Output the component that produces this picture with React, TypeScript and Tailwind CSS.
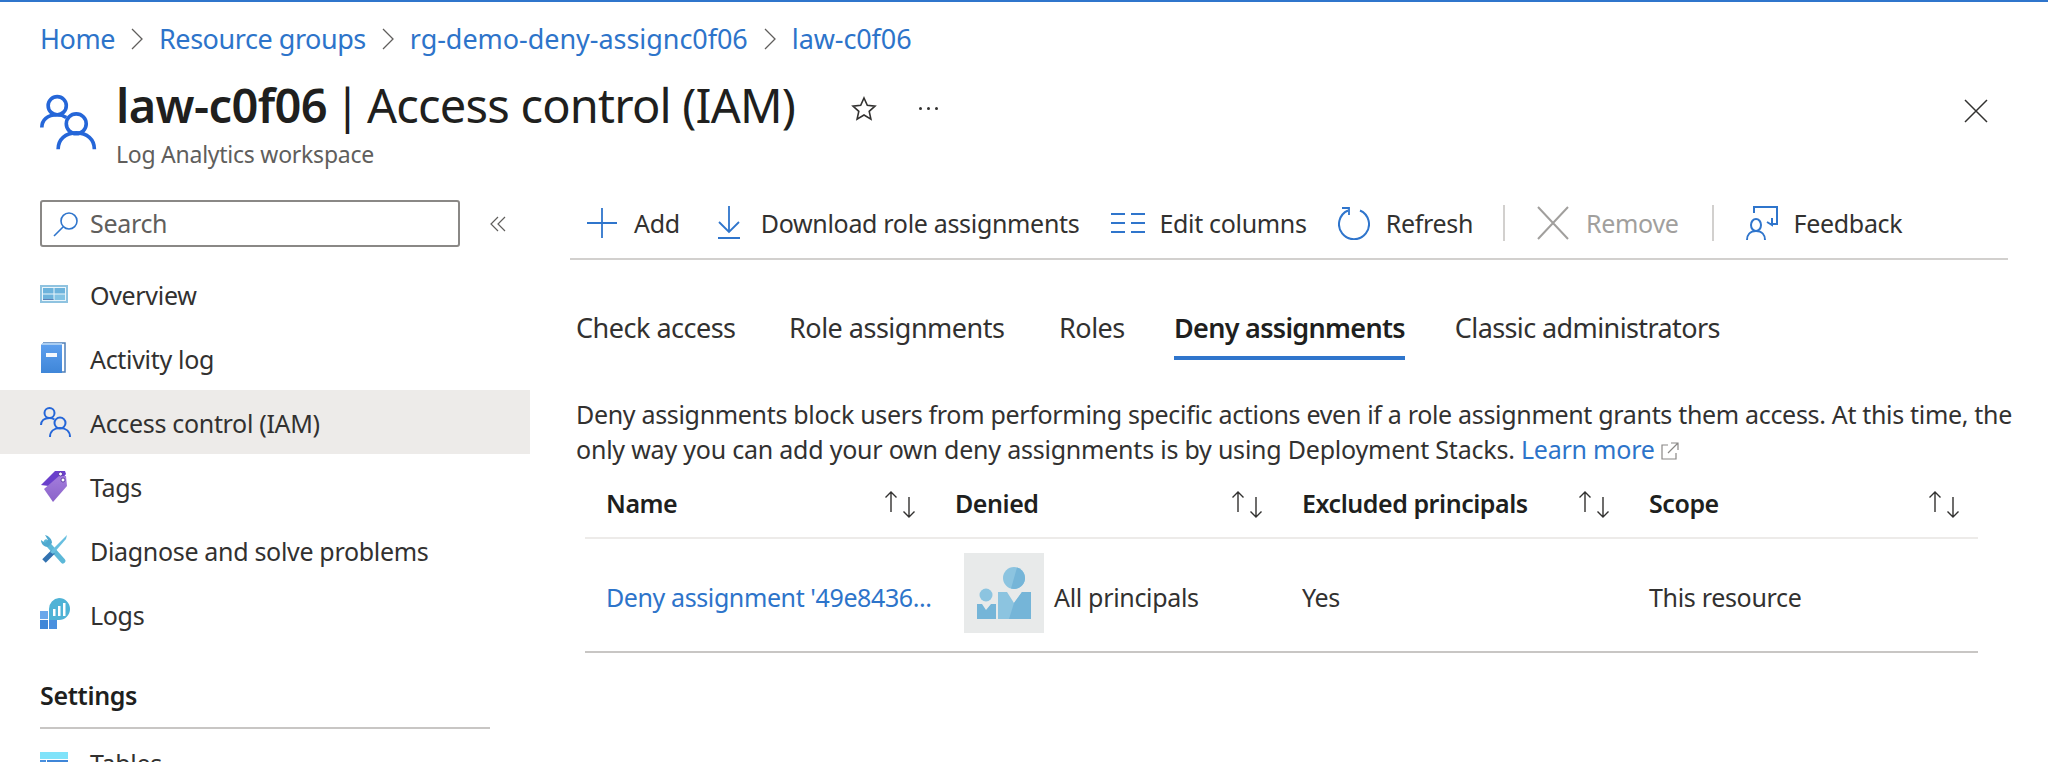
import React from 'react';

const navItems = [
  { label: 'Overview', icon: <OverviewIcon /> },
  { label: 'Activity log', icon: <BookIcon /> },
  { label: 'Access control (IAM)', icon: <PeopleIcon size={32} />, active: true },
  { label: 'Tags', icon: <TagIcon /> },
  { label: 'Diagnose and solve problems', icon: <ToolsIcon /> },
  { label: 'Logs', icon: <LogsIcon /> },
];

function PeopleIcon({ size }: { size: number }) {
  return (
    <svg width={size} height={size} viewBox="0 0 32 32" fill="none" stroke="#2566d8" strokeWidth="2">
      <circle cx="9.5" cy="7" r="5" />
      <path d="M1 19c0-4 3-7 8.500-7 2 0 3.500.5 5 1.500" />
      <circle cx="20" cy="17" r="5.500" />
      <path d="M10 31c0-5.500 4-9 10-9s10 3.500 10 9" />
    </svg>
  );
}

function OverviewIcon() {
  return (
    <svg width="28" height="18" viewBox="0 0 28 18">
      <rect width="28" height="18" fill="#8fc3e0" />
      <rect x="2" y="2" width="24" height="14" fill="#eaf5fb" />
      <rect x="3" y="3" width="10.500" height="5.500" fill="#6db3dc" />
      <rect x="14.500" y="3" width="10.500" height="5.500" fill="#6db3dc" />
      <rect x="3" y="9.500" width="10.500" height="5.500" fill="#6db3dc" />
      <rect x="14.500" y="9.500" width="10.500" height="5.500" fill="#83c3e4" />
      <rect x="3" y="14" width="10.500" height="1" fill="#5b7fb5" />
    </svg>
  );
}

function BookIcon() {
  return (
    <svg width="26" height="32" viewBox="0 0 26 32">
      <defs>
        <linearGradient id="bookFill" x1="0" y1="0" x2="0" y2="1">
          <stop offset="0" stopColor="#5ea0ef" />
          <stop offset="1" stopColor="#3f86d8" />
        </linearGradient>
      </defs>
      <path d="M3 1h22v29h-3" fill="none" stroke="#4f7fb8" strokeWidth="1.500" />
      <path d="M3 1 1 3v28h21V1z" fill="url(#bookFill)" />
      <path d="M3 1h19v2H1z" fill="#a9cdf2" />
      <rect x="6" y="11" width="11" height="4" fill="#f4f8fd" />
    </svg>
  );
}

function TagIcon() {
  return (
    <svg width="28" height="32" viewBox="0 0 28 32">
      <defs>
        <linearGradient id="tagFill" x1="0" y1="0" x2="0" y2="1">
          <stop offset="0" stopColor="#a37cdc" />
          <stop offset="1" stopColor="#8a63c9" />
        </linearGradient>
      </defs>
      <path d="M1 15 15 1h10l1 3-10 13z" fill="#6a3fcb" />
      <path d="M4 19 19 6h7l1 10-14 16z" fill="url(#tagFill)" />
      <circle cx="20.500" cy="4" r="2" fill="#fff" stroke="#4b2a95" strokeWidth="0.800" />
      <circle cx="23" cy="10" r="2" fill="#fff" stroke="#4b2a95" strokeWidth="0.800" />
    </svg>
  );
}

function ToolsIcon() {
  return (
    <svg width="28" height="30" viewBox="0 0 28 30">
      <path d="M6 7 23 26" stroke="#5cb8d8" strokeWidth="5" strokeLinecap="round" />
      <path d="M1 5c0 4 3 7 7 7l4-4c0-4-3-7-7-8l3 5-3 3z" fill="#4fa9cf" />
      <path d="M13 17 4 26" stroke="#3272b0" strokeWidth="5" />
      <path d="M10 17 24 3l3-3-1 4-13 15z" fill="#68bfe0" />
    </svg>
  );
}

function LogsIcon() {
  return (
    <svg width="30" height="32" viewBox="0 0 30 32">
      <rect y="13" width="8" height="8" fill="#6aa8ea" />
      <rect y="22" width="8" height="9" fill="#3f86d8" />
      <rect x="9" y="22" width="8" height="9" fill="#4a90df" />
      <path d="M19 0a11 11 0 0 1 0 22H9V11A11 11 0 0 1 19 0z" fill="#4fb3d6" />
      <rect x="13" y="11" width="2.500" height="7" fill="#fff" />
      <rect x="18" y="8" width="2.500" height="10" fill="#fff" />
      <rect x="23" y="5" width="2.500" height="13" fill="#fff" />
    </svg>
  );
}

function TablesIcon() {
  return (
    <svg width="28" height="24" viewBox="0 0 28 24">
      <rect width="28" height="7" fill="#7fe3fa" />
      <rect y="8" width="6" height="6" fill="#4a90df" />
      <rect x="7" y="8" width="21" height="6" fill="#3f86d8" />
      <rect y="15" width="6" height="6" fill="#4a90df" />
      <rect x="7" y="15" width="21" height="6" fill="#3f86d8" />
    </svg>
  );
}

function SortIcon() {
  return (
    <svg width="34" height="27" viewBox="0 0 34 27" fill="none" stroke="#323130" strokeWidth="1.400">
      <path d="M8 21V1M2.500 6.500 8 1l5.500 5.500" />
      <path d="M26 6v20M20.500 20.500 26 26l5.500-5.500" />
    </svg>
  );
}

function Chevron() {
  return (
    <svg width="12" height="22" viewBox="0 0 12 22" fill="none" stroke="#605e5c" strokeWidth="1.300" className="mx-[16px]">
      <path d="M1 1l10 10L1 21" />
    </svg>
  );
}

function ToolbarButton({ icon, label, disabled, className }: { icon: React.ReactNode; label: string; disabled?: boolean; className?: string }) {
  return (
    <div className={`flex items-center ${className ?? ''}`}>
      {icon}
      <span className={`pt-[2px] ${disabled ? 'text-[#a19f9d]' : 'text-[#323130]'}`}>{label}</span>
    </div>
  );
}

const columns = [
  { name: 'Name', width: 'w-[349px]' },
  { name: 'Denied', width: 'w-[347px]' },
  { name: 'Excluded principals', width: 'w-[347px]' },
  { name: 'Scope', width: 'w-[350px]' },
];

export default function App() {
  return (
    <div className="h-[762px] w-[2048px] overflow-hidden bg-white border-t-2 border-[#2f75cc] text-[25px] tracking-[-0.32px] text-[#323130] font-['Noto_Sans','Liberation_Sans',sans-serif]">
      <nav className="flex h-[74px] items-center pl-[40px] text-[27px] tracking-[-0.45px] text-[#2d74ca]">
        <span>Home</span>
        <Chevron />
        <span>Resource groups</span>
        <Chevron />
        <span className="tracking-[-0.05px]">rg-demo-deny-assignc0f06</span>
        <Chevron />
        <span className="tracking-[-0.1px]">law-c0f06</span>
      </nav>

      <header className="flex h-[112px] pl-[40px] pr-[59px]">
        <div className="mt-[17px] w-[76px]">
          <PeopleIcon size={58} />
        </div>
        <div className="flex-1">
          <h1 className="h-[60px] text-[47px] leading-[58px] tracking-[-0.8px] text-[#201f1e]">
            <span className="mr-[-4px] font-semibold tracking-[-0.6px]">law-c0f06</span> <span className="mr-[-4px]">|</span> Access control (IAM)
            <span className="relative inline-block align-middle ml-[56px] mb-[3px]">
              <svg width="26" height="26" viewBox="0 0 26 26" fill="none" stroke="#323130" strokeWidth="1.600">
                <path d="M13 2l3.300 7.300 7.700.800-5.800 5.300 1.700 7.800L13 19l-6.900 4.200 1.700-7.800L2 10.100l7.700-.8z" />
              </svg>
            </span>
            <span className="relative inline-block align-middle ml-[42px] mb-[4px]">
              <span className="flex gap-[5px]">
                <span className="h-[3px] w-[3px] rounded-full bg-[#323130]" />
                <span className="h-[3px] w-[3px] rounded-full bg-[#323130]" />
                <span className="h-[3px] w-[3px] rounded-full bg-[#323130]" />
              </span>
            </span>
          </h1>
          <p className="mt-[1px] text-[23px] tracking-[-0.25px] text-[#605e5c]">Log Analytics workspace</p>
        </div>
        <svg width="26" height="26" viewBox="0 0 26 26" fill="none" stroke="#323130" strokeWidth="1.500" className="mt-[22px]">
          <path d="M2 2l22 22M24 2 2 24" />
        </svg>
      </header>

      <div className="flex">
        <aside className="w-[530px] shrink-0">
          <div className="flex items-center pl-[40px] pt-[12px]">
            <div className="flex h-[47px] w-[420px] items-center rounded-[3px] border-2 border-[#8a8886] pl-[10px] text-[#605e5c]">
              <svg width="28" height="28" viewBox="0 0 28 28" fill="none" stroke="#2f75cc" strokeWidth="1.600" className="mr-[10px]">
                <circle cx="17" cy="11" r="8" />
                <path d="M11 17 2 26" />
              </svg>
              Search
            </div>
            <svg width="16" height="16" viewBox="0 0 16 16" fill="none" stroke="#605e5c" strokeWidth="1.200" className="ml-[30px]">
              <path d="M8 1 1 8l7 7M15 1 8 8l7 7" />
            </svg>
          </div>
          <ul className="mt-[15px]">
            {navItems.map((item) => (
              <li
                key={item.label}
                className={`flex h-[64px] items-center pl-[40px] ${item.active ? 'bg-[#edebe9]' : ''}`}
              >
                <span className="flex w-[50px] shrink-0">{item.icon}</span>
                <span className="pt-[4px]">{item.label}</span>
              </li>
            ))}
          </ul>
          <div className="mx-[40px] mt-[32px] border-b-2 border-[#c8c6c4] pb-[15px] font-semibold leading-[34px] text-[#201f1e]">
            Settings
          </div>
          <div className="mt-[16px] flex items-center pl-[40px]">
            <span className="flex w-[50px] shrink-0">
              <TablesIcon />
            </span>
            Tables
          </div>
        </aside>

        <main className="min-w-0 flex-1 pl-[40px]">
          <div className="mr-[40px] flex h-[72px] items-center border-b-2 border-[#d2d0ce] pl-[16px]">
            <ToolbarButton
              label="Add"
              icon={
                <svg width="32" height="32" viewBox="0 0 32 32" stroke="#2f75cc" strokeWidth="1.800" className="mr-[16px]">
                  <path d="M16 1v30M1 16h30" />
                </svg>
              }
            />
            <ToolbarButton
              className="ml-[37px]"
              label="Download role assignments"
              icon={
                <svg width="24" height="34" viewBox="0 0 24 34" fill="none" stroke="#2f75cc" strokeWidth="1.800" className="mr-[20px]">
                  <path d="M12 0v26M2 16l10 10 10-10M1 32h22" />
                </svg>
              }
            />
            <ToolbarButton
              className="ml-[32px]"
              label="Edit columns"
              icon={
                <svg width="34" height="22" viewBox="0 0 34 22" stroke="#2f75cc" strokeWidth="2" className="mr-[14px]">
                  <path d="M0 2h14M20 2h14M0 11h14M20 11h14M0 20h14M20 20h14" />
                </svg>
              }
            />
            <ToolbarButton
              className="ml-[31px]"
              label="Refresh"
              icon={
                <svg width="32" height="34" viewBox="0 0 32 34" fill="none" stroke="#2f75cc" strokeWidth="2" className="mr-[16px]">
                  <path d="M10 4.500a15 15 0 1 0 12 0" />
                  <path d="M4 2h7v7" strokeWidth="1.800" />
                </svg>
              }
            />
            <span className="ml-[30px] h-[36px] w-[2px] bg-[#d2d0ce]" />
            <ToolbarButton
              className="ml-[31px]"
              disabled
              label="Remove"
              icon={
                <svg width="34" height="34" viewBox="0 0 34 34" stroke="#a19f9d" strokeWidth="2" className="mr-[16px]">
                  <path d="M2 1l30 32M32 1 2 33" />
                </svg>
              }
            />
            <span className="ml-[33px] h-[36px] w-[2px] bg-[#d2d0ce]" />
            <ToolbarButton
              className="ml-[32px]"
              label="Feedback"
              icon={
                <svg width="32" height="34" viewBox="0 0 32 34" fill="none" stroke="#2f75cc" strokeWidth="2" className="mr-[16px]">
                  <path d="M8 7V1h23v17h-7M26 12v7l-5-3" />
                  <ellipse cx="10" cy="19" rx="5" ry="6" />
                  <path d="M1 34c0-5 3-9 9-9s9 4 9 9" />
                </svg>
              }
            />
          </div>

          <div className="mt-[51px] flex h-[85px] items-start pl-[6px] text-[27px] tracking-[-0.5px]">
            <span className="w-[213px] leading-[34px]">Check access</span>
            <span className="w-[270px] leading-[34px]">Role assignments</span>
            <span className="w-[115px] leading-[34px]">Roles</span>
            <span className="mr-[50px] h-[49px] border-b-4 border-[#2f75cc] font-semibold leading-[34px] tracking-[-0.7px] text-[#201f1e]">
              Deny assignments
            </span>
            <span className="leading-[34px] tracking-[-0.6px]">Classic administrators</span>
          </div>

          <div className="pl-[6px] pt-[1px] leading-[35px] whitespace-nowrap">
            <p>Deny assignments block users from performing specific actions even if a role assignment grants them access. At this time, the</p>
            <p className="tracking-[-0.22px]">
              only way you can add your own deny assignments is by using Deployment Stacks.{' '}
              <span className="text-[#2d74ca]">Learn more</span>
              <svg width="18" height="18" viewBox="0 0 18 18" fill="none" stroke="#8a8886" strokeWidth="1.200" className="ml-[6px] inline-block align-[-1px]">
                <path d="M7 3H1v14h14v-6M7 11 17 1M10 1h7v7" />
              </svg>
            </p>
          </div>

          <div className="ml-[15px] mt-[4px] w-[1393px]">
            <div className="flex h-[68px] items-center border-b-2 border-[#edebe9] font-semibold tracking-[-0.45px] text-[#201f1e]">
              {columns.map((col) => (
                <div key={col.name} className={`flex items-center justify-between pl-[21px] pr-[17px] ${col.width}`}>
                  {col.name}
                  <SortIcon />
                </div>
              ))}
            </div>
            <div className="flex h-[114px] items-center border-b-2 border-[#c8c6c4]">
              <div className="w-[349px] whitespace-nowrap pl-[21px] pt-[5px] tracking-[-0.4px] text-[#2d74ca]">Deny assignment '49e8436...</div>
              <div className="flex w-[347px] items-center pl-[30px]">
                <svg width="80" height="80" viewBox="0 0 80 80" className="mb-[5px] mr-[10px]">
                  <rect width="80" height="80" fill="#e8eaea" />
                  <circle cx="50" cy="25" r="11" fill="#8cc4e0" />
                  <path d="M53 14.400A11 11 0 0 1 47 35.600z" fill="#75b5d8" />
                  <path d="M34 39h9l7 11 8-11h9v27H34z" fill="#8cc4e0" />
                  <path d="M50 50l8-11h9v27H45z" fill="#75b5d8" />
                  <circle cx="22" cy="42" r="6.500" fill="#8cc4e0" />
                  <path d="M13 51h5l4 6 5-6h5v15H13z" fill="#75b5d8" />
                </svg>
                <span className="pt-[5px]">All principals</span>
              </div>
              <div className="w-[347px] pl-[21px] pt-[5px]">Yes</div>
              <div className="w-[350px] pl-[21px] pt-[5px]">This resource</div>
            </div>
          </div>
        </main>
      </div>
    </div>
  );
}
